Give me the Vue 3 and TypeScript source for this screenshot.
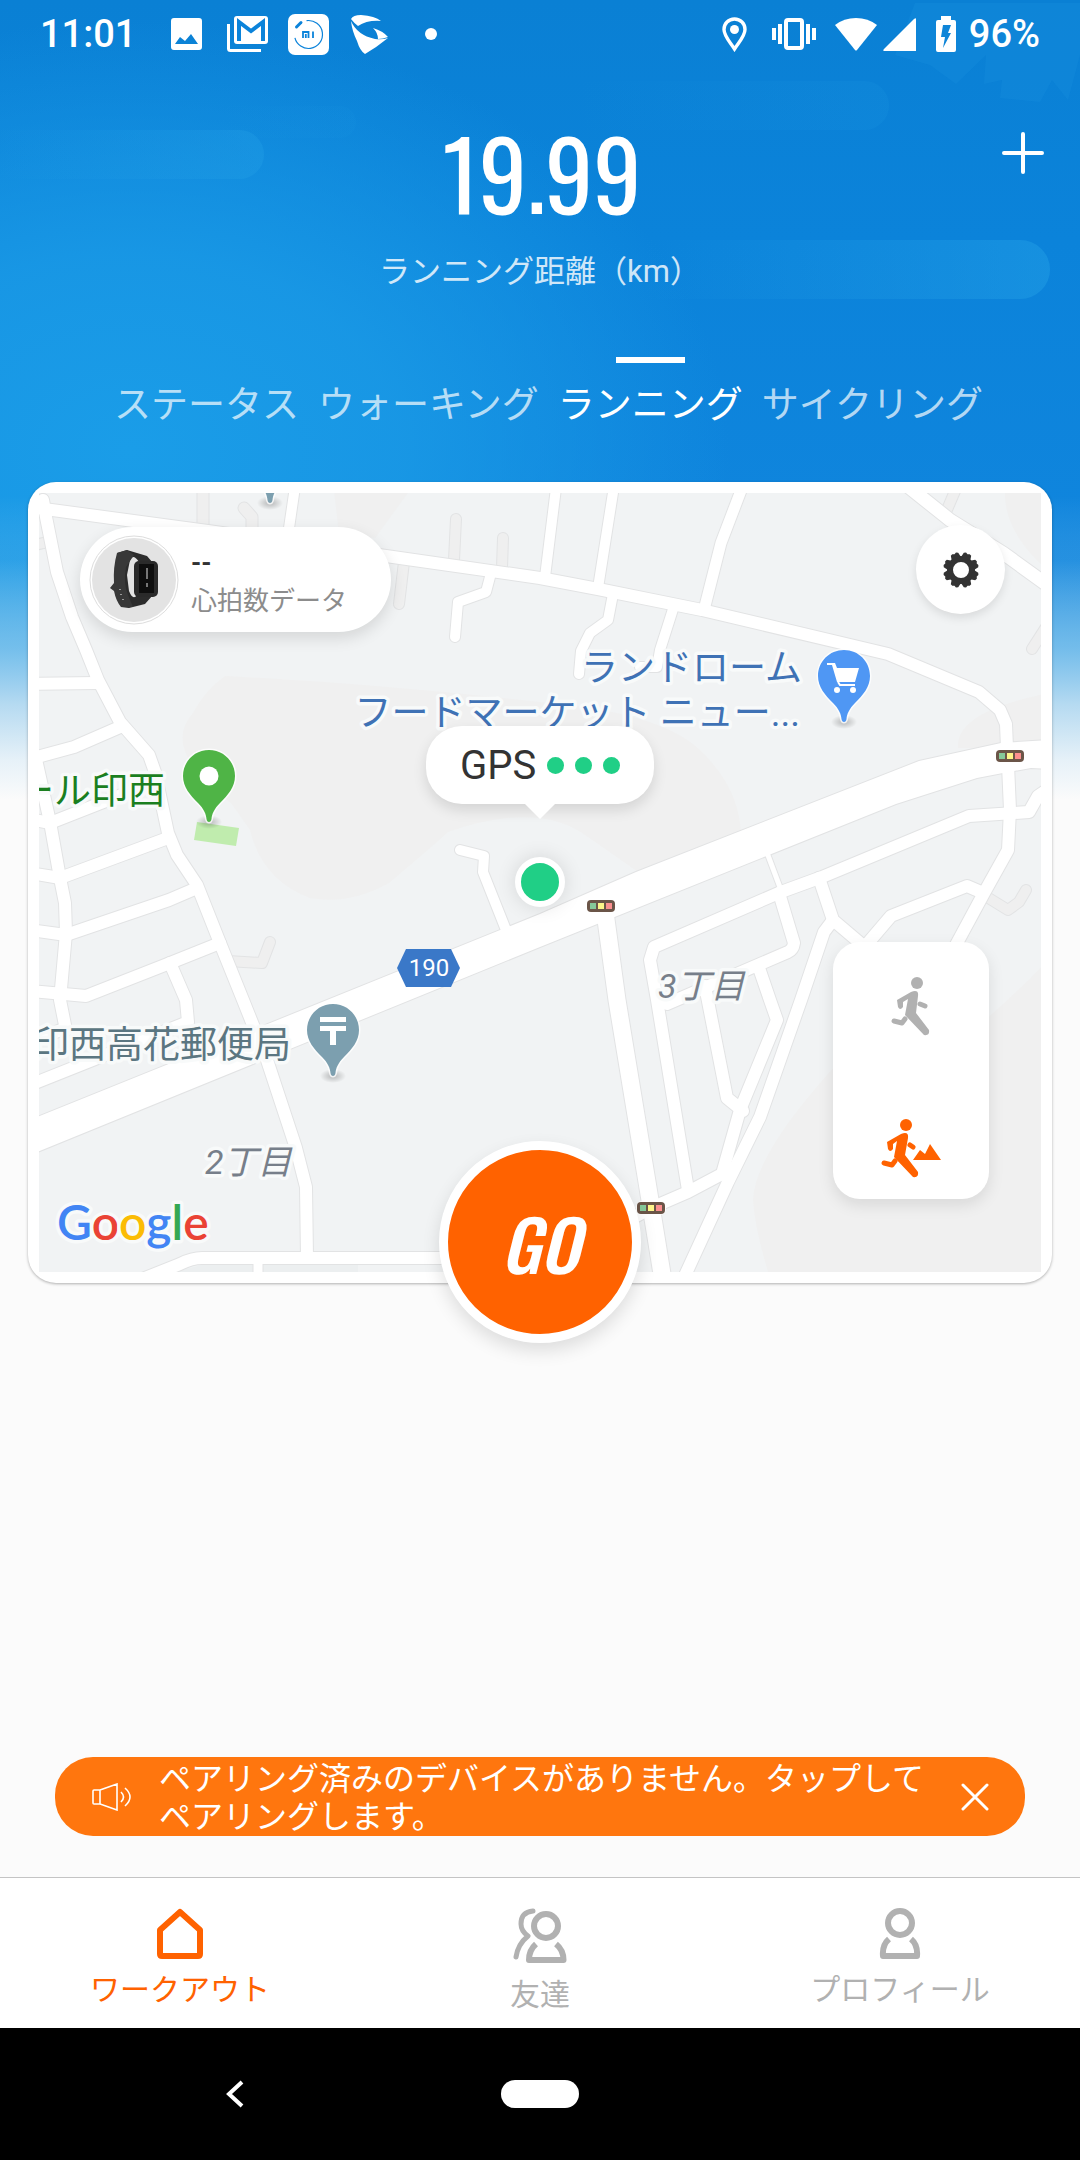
<script setup lang="ts">
import { ref } from 'vue'

interface Road { d: string; w: number }
interface Point { x: number; y: number }
interface Label { text: string; x: number; y: number; kind: string }
interface Pin extends Point { color: string; kind: string }

const tabs: string[] = ['ステータス', 'ウォーキング', 'ランニング', 'サイクリング']
const activeTab = ref(2)
const mode = ref<'road' | 'trail'>('trail')
const bannerOpen = ref(true)

const lanes: Road[] = [
  { d: 'M203 480V526', w: 11 },
  { d: 'M244 508L252 517V530', w: 11 },
  { d: 'M30 546L48 542', w: 10 },
  { d: 'M456 519L454 560', w: 10 },
  { d: 'M503 538L502 568', w: 10 },
  { d: 'M404 562L399 604', w: 10 },
  { d: 'M958 484L946 512', w: 10 },
  { d: 'M1048 624L1032 649', w: 10 },
  { d: 'M228 961L262 963L270 942', w: 10 },
  { d: 'M982 894L1008 910L1019 902L1026 890', w: 10 },
]

const roads: Road[] = [
  { d: 'M30 507L215 532L386 556L540 578L598 589L702 610L888 654L979 692L1000 710L1006 724L1007 748', w: 12 },
  { d: 'M43 500L46 517L57 572L72 617L86 650L98 680L120 722L149 755L155 772L168 833L177 855L197 885L220 943L243 1000L267 1060L296 1148L306 1187L307 1258', w: 12 },
  { d: 'M296 480L288 535', w: 10 },
  { d: 'M557 480L545 577', w: 10 },
  { d: 'M615 480L598 588', w: 10 },
  { d: 'M745 480L721 543L704 610', w: 11 },
  { d: 'M900 480L950 520L1003 553L1050 587', w: 13 },
  { d: 'M491 573L486 592L458 602L455 637', w: 10 },
  { d: 'M613 594L608 620L590 633L581 651L579 674', w: 10 },
  { d: 'M674 606L660 650L657 667L640 667', w: 10 },
  { d: 'M30 684L97 683', w: 12 },
  { d: 'M30 759L74 747L120 727', w: 12 },
  { d: 'M35 755L50 822L60 878L65 903L66 933L60 1000L66 1030', w: 12 },
  { d: 'M30 819L50 823L157 781', w: 12 },
  { d: 'M30 873L60 878L168 838', w: 12 },
  { d: 'M30 930L66 935L169 900L197 888', w: 12 },
  { d: 'M30 991L86 996L165 965L220 943', w: 12 },
  { d: 'M170 963L186 1000L188 1022L30 1085', w: 12 },
  { d: 'M30 1042L66 1028', w: 12 },
  { d: 'M140 1280L180 1264Q192 1258 202 1258H560L651 1208L688 1192L722 1174L740 1110L777 1020L771 1003L759 968', w: 12 },
  { d: 'M258 1258V1280', w: 9 },
  { d: 'M460 850L484 856L483 872L506 930', w: 10 },
  { d: 'M604 905L617 1000L650 1200L663 1280', w: 17 },
  { d: 'M1008 765L1010 810L1008 850L984 893L950 956', w: 12 },
  { d: 'M1050 788L1038 796L1029 812L969 816L822 877L781 892L654 947L650 960L657 1000L688 1190', w: 12 },
  { d: 'M766 850L781 890', w: 5 },
  { d: 'M779 893L794 943Q793 950 788 952L667 1004', w: 12 },
  { d: 'M705 986L727 1098L743 1111', w: 12 },
  { d: 'M819 878L833 920L866 948', w: 12 },
  { d: 'M833 920L824 932L801 1000L760 1117L728 1182L682 1282', w: 12 },
  { d: 'M981 892L967 886L891 916L862 950', w: 12 },
]

const highway =
  'M30 1120L540 914L636 872L919 761L1001 743L1050 740V769L1031 768L1003 773L977 778L896 804L540 947L30 1155Z'

const signals: Point[] = [
  { x: 601, y: 906 },
  { x: 1010, y: 756 },
  { x: 651, y: 1208 },
]

const pins: Pin[] = [
  { x: 209, y: 776, color: '#4fb446', kind: 'place' },
  { x: 844, y: 676, color: '#4f97f4', kind: 'shop' },
  { x: 333, y: 1030, color: '#7c9faf', kind: 'post' },
  { x: 270, y: 457, color: '#7c9faf', kind: 'none' },
]

const labels: Label[] = [
  { text: 'ール印西', x: 165, y: 804, kind: 'park' },
  { text: 'ランドローム', x: 802, y: 681, kind: 'shop' },
  { text: 'フードマーケット ニュー...', x: 800, y: 726, kind: 'shop' },
  { text: '印西高花郵便局', x: 291, y: 1058, kind: 'post' },
]
</script>

<template>
  <div class="screen">
    <svg class="backdrop" viewBox="0 0 1080 800" preserveAspectRatio="none" aria-hidden="true">
      <defs>
        <linearGradient id="sky" x1="0" y1="0" x2="0" y2="1">
          <stop offset="0" stop-color="#0a80d4" />
          <stop offset=".3" stop-color="#0b83da" />
          <stop offset="1" stop-color="#1487e0" />
        </linearGradient>
        <radialGradient id="glow" gradientUnits="userSpaceOnUse" cx="0" cy="0" r="1" gradientTransform="translate(130 450) scale(600 430)">
          <stop offset="0" stop-color="#1a9de8" />
          <stop offset=".45" stop-color="#1a9ae6" stop-opacity=".85" />
          <stop offset="1" stop-color="#1a9ae6" stop-opacity="0" />
        </radialGradient>
        <linearGradient id="cloud" x1="0" y1="0" x2="1" y2="0">
          <stop offset=".1" stop-color="#27a5e8" stop-opacity="0" />
          <stop offset="1" stop-color="#27a5e8" stop-opacity=".4" />
        </linearGradient>
        <linearGradient id="fade" x1="0" y1="0" x2="0" y2="1">
          <stop offset=".62" stop-color="#fbfbfb" stop-opacity="0" />
          <stop offset=".7" stop-color="#9fd2ee" stop-opacity=".15" />
          <stop offset=".81" stop-color="#84c6ed" stop-opacity=".85" />
          <stop offset=".88" stop-color="#b5daf1" />
          <stop offset=".95" stop-color="#e6f1f8" />
          <stop offset="1" stop-color="#fbfbfb" />
        </linearGradient>
      </defs>
      <rect width="1080" height="800" fill="url(#sky)" />
      <rect width="1080" height="800" fill="url(#glow)" />
      <rect x="-40" y="130" width="304" height="49" rx="25" fill="url(#cloud)" opacity=".7" />
      <rect x="200" y="106" width="156" height="32" rx="16" fill="url(#cloud)" opacity=".15" />
      <rect x="540" y="81" width="349" height="49" rx="25" fill="url(#cloud)" opacity=".3" />
      <rect x="600" y="240" width="450" height="59" rx="30" fill="url(#cloud)" />
      <path d="M915 3H1080V55L1068 100L1052 80L1040 102L1000 98L1002 80L984 84L986 55L956 84L930 65L895 55Z" fill="#27a5e8" opacity=".14" />
      <rect width="1080" height="800" fill="url(#fade)" />
    </svg>

    <header class="status">
      <div class="status-side">
        <span class="clock">11:01</span>
        <svg class="s-photo" width="31" height="32" viewBox="0 0 31 32"><path fill="#fff" fill-rule="evenodd" d="M3 0H28Q31 0 31 3V29Q31 32 28 32H3Q0 32 0 29V3Q0 0 3 0ZM4 26H27L20 16L14 23L9 19Z" /></svg>
        <svg class="s-mail" width="41" height="36" viewBox="0 0 41 36"><path d="M1.500 8V32.500Q1.500 34.500 3.500 34.500H34" fill="none" stroke="#fff" stroke-width="3" /><rect x="7" y="0" width="34" height="28" rx="3" fill="#fff" /><path d="M12 25V6L24 15L36 6V25" fill="none" stroke="#0b83da" stroke-width="4" /></svg>
        <svg class="s-mi" width="41" height="41" viewBox="0 0 41 41"><rect width="41" height="41" rx="7" fill="#fff" /><circle cx="20.500" cy="20.500" r="14" fill="none" stroke="#0b83da" stroke-width="1.200" stroke-dasharray="64 24" transform="rotate(-98 20.500 20.500)" /><path d="M8.500 13L13 8.500" stroke="#0b83da" stroke-width="3" stroke-linecap="round" /><path d="M15 24V18H20.500V24M17.800 20V24M25 17.500V24" fill="none" stroke="#0b83da" stroke-width="1.800" /></svg>
        <svg class="s-wing" width="38" height="39" viewBox="0 0 38 39"><path fill="#fff" d="M0 4Q2 0 10 0Q24 1 30 6Q16 5 7 11Q3 8 0 4ZM0 6Q6 20 24 24Q31 25 37 23Q26 32 14 39Q9 36 6 26Q1 16 0 6ZM22 13Q32 16 37 22Q32 24 27 24Q27 18 22 13Z" /></svg>
        <span class="s-dot"></span>
      </div>
      <div class="status-side">
        <svg class="s-loc" width="25" height="35" viewBox="0 0 25 35"><path d="M12.500 2C6.500 2 2 6.500 2 12.500C2 19 8 25 12.500 32C17 25 23 19 23 12.500C23 6.500 18.500 2 12.500 2Z" fill="none" stroke="#fff" stroke-width="3.400" /><circle cx="12.500" cy="12.500" r="4.500" fill="#fff" /></svg>
        <svg class="s-vib" width="44" height="32" viewBox="0 0 44 32"><rect x="14" y="2" width="16" height="28" rx="2" fill="none" stroke="#fff" stroke-width="4" /><path d="M2 10V22M8 6V26M36 6V26M42 10V22" stroke="#fff" stroke-width="4" /></svg>
        <svg class="s-wifi" width="42" height="33" viewBox="0 0 42 33"><path d="M0 7Q9 0 21 0T42 7L22 32Q21 33 20 32Z" fill="#fff" /></svg>
        <svg class="s-sig" width="33" height="33" viewBox="0 0 33 33"><path d="M33 1V33H1Q-.5 32.500 1 31L31 1Q33-.5 33 1Z" fill="#fff" /></svg>
        <svg class="s-bat" width="20" height="36" viewBox="0 0 20 36"><path fill="#fff" fill-rule="evenodd" d="M5 0H15V4H18Q20 4 20 6V34Q20 36 18 36H2Q0 36 0 34V6Q0 4 2 4H5ZM7 9L5 21H9L7 32L15 17H12L15 9Z" /></svg>
        <span class="percent">96%</span>
      </div>
    </header>

    <section class="summary">
      <button class="add" type="button" aria-label="追加">
        <svg width="42" height="42" viewBox="0 0 42 42"><path d="M21 2V40M2 21H40" stroke="#fff" stroke-width="4" stroke-linecap="round" /></svg>
      </button>
      <div class="distance">19.99</div>
      <div class="caption">ランニング距離（km）</div>
    </section>

    <nav class="tabs">
      <button
        v-for="(tab, i) in tabs"
        :key="tab"
        type="button"
        class="tab"
        :class="{ active: i === activeTab }"
        @click="activeTab = i"
      >{{ tab }}</button>
    </nav>

    <main class="card">
      <svg class="map" viewBox="39 493 1002 779" role="img" aria-label="地図">
        <defs>
          <radialGradient id="ground"><stop offset="0" stop-opacity=".25" /><stop offset="1" stop-opacity="0" /></radialGradient>
        </defs>
        <rect x="39" y="493" width="1002" height="779" fill="#f1f3f4" />
        <g fill="#f0f0f0">
          <path d="M225 676Q380 684 540 702Q660 712 700 750Q742 790 741 840L638 872L588 837Q540 800 448 832Q440 840 389 883Q350 905 310 898Q262 880 250 830L231 803Q160 750 193 713Q205 690 225 676Z" />
          <path d="M850 1050Q755 1150 753 1200Q755 1230 769 1275H1045V963Q1000 1010 960 1040Z" />
          <path d="M958 748Q955 712 1045 694V748Z" />
          <path d="M334 490L339 533L375 538L410 490Z" />
          <path d="M1005 490Q1003 530 1045 568V490Z" />
        </g>
        <path d="M175 1272L205 1264H358V1272Z" fill="#eceff0" />
        <g fill="none" stroke-linecap="round" stroke-linejoin="round">
          <path v-for="(r, i) in lanes" :key="'lc' + i" :d="r.d" stroke="#e2e3e4" :stroke-width="r.w + 2" />
          <path v-for="(r, i) in lanes" :key="'lf' + i" :d="r.d" stroke="#efefef" :stroke-width="r.w" />
          <path v-for="(r, i) in roads" :key="'rc' + i" :d="r.d" stroke="#e2e3e4" :stroke-width="r.w + 2" />
          <path :d="highway" stroke="#e2e3e4" stroke-width="2" />
          <path v-for="(r, i) in roads" :key="'rf' + i" :d="r.d" stroke="#fff" :stroke-width="r.w" />
        </g>
        <path :d="highway" fill="#fff" />
        <path d="M197 822L239 828L236 846L194 840Z" fill="#c0ecae" />

        <g v-for="(s, i) in signals" :key="'s' + i" :transform="`translate(${s.x} ${s.y})`">
          <rect x="-15" y="-7" width="30" height="14" rx="6" fill="#fff" />
          <rect x="-14" y="-6" width="28" height="12" rx="4" fill="#6b5548" />
          <rect x="-11" y="-3" width="6" height="6" fill="#86c99a" />
          <rect x="-3" y="-3" width="6" height="6" fill="#fdf58a" />
          <rect x="5" y="-3" width="6" height="6" fill="#fb8f8f" />
        </g>

        <path d="M406 949H451L460 968L451 987H406L397 968Z" fill="#3a78c8" />
        <text class="shield" x="429" y="976" text-anchor="middle">190</text>

        <g v-for="(p, i) in pins" :key="'p' + i" :transform="`translate(${p.x} ${p.y})`">
          <ellipse cx="0" cy="46" rx="13" ry="7" fill="url(#ground)" />
          <path
            d="M0-26C14.500-26 26-14.500 26 0C26 11 19 19 11 27C5 33 3 38 2.500 43Q2 46 0 46T-2.500 43C-3 38-5 33-11 27C-19 19-26 11-26 0C-26-14.500-14.500-26 0-26Z"
            :fill="p.color" stroke="#fff" stroke-width="3" stroke-opacity=".8" paint-order="stroke"
          />
          <circle v-if="p.kind === 'place'" r="9.500" fill="#fff" />
          <g v-else-if="p.kind === 'shop'">
            <path d="M-17-13H-9L-7-8H15L11 6H-7L-12-11H-17Z" fill="#fff" />
            <path d="M-6 6L-4 9H11" fill="none" stroke="#fff" stroke-width="2" />
            <circle cx="-7" cy="14" r="3" fill="#fff" /><circle cx="9" cy="14" r="3" fill="#fff" />
          </g>
          <path v-else-if="p.kind === 'post'" d="M-13-13H13V-8H-13ZM-13-4H13V1H3V15H-3V1H-13Z" fill="#fff" />
        </g>

        <text v-for="l in labels" :key="l.text" class="label" :class="l.kind" :x="l.x" :y="l.y" text-anchor="end">{{ l.text }}</text>
        <text class="label block" x="658" y="998">3丁目</text>
        <text class="label block" x="205" y="1174">2丁目</text>
        <text class="label brand" x="57" y="1240"><tspan fill="#4285f4">G</tspan><tspan fill="#ea4335">o</tspan><tspan fill="#fbbc05">o</tspan><tspan fill="#4285f4">g</tspan><tspan fill="#34a853">l</tspan><tspan fill="#ea4335">e</tspan></text>
      </svg>

      <button class="heart" type="button">
        <svg width="90" height="90" viewBox="0 0 90 90" aria-hidden="true">
          <circle cx="45" cy="45" r="44" fill="#fff" stroke="#ddd" />
          <circle cx="45" cy="45" r="42" fill="#e3e3e3" />
          <path d="M28 18L38 15L58 21L64 28L50 27Q44 18 41 25L38 40L40 56Q44 66 48 60L64 60L56 69L40 73L32 72L35 50Z" fill="#2c2c2c" />
          <path d="M28 18L38 15L45 20L37 32Q34 48 39 60L44 72L32 72Q27 66 25 56L21 53L25 48Q24 32 28 18Z" fill="#383838" />
          <rect x="45" y="26" width="24" height="36" rx="5" fill="#2a2a2a" />
          <rect x="50" y="29" width="15" height="29" fill="#0e0e0e" />
          <path d="M58 33V44M58 48V52" stroke="#777" stroke-width="2" />
          <path d="M31 54V55M32 59V60M34 64V65" stroke="#999" stroke-width="2" />
        </svg>
        <span class="heart-text">
          <span class="heart-value">--</span>
          <span class="heart-name">心拍数データ</span>
        </span>
      </button>

      <button class="settings" type="button" aria-label="設定">
        <svg width="36" height="36" viewBox="-18 -18 36 36"><g fill="#333"><path fill-rule="evenodd" d="M0-14A14 14 0 1 1 0 14A14 14 0 1 1 0-14ZM0-8A8 8 0 1 0 0 8A8 8 0 1 0 0-8Z" /><path v-for="a in 8" :key="a" d="M-5-12L-4-17L-2-18L0-17L2-18L4-17L5-12Z" :transform="`rotate(${a * 45 - 22.5})`" /></g></svg>
      </button>

      <div class="gps">
        <span class="gps-name">GPS</span><i></i><i></i><i></i>
      </div>
      <div class="here"></div>

      <div class="modes">
        <button type="button" aria-label="ランニング" :aria-pressed="mode === 'road'" @click="mode = 'road'">
          <svg width="40" height="60" viewBox="0 0 40 60" :class="{ on: mode === 'road' }">
            <circle cx="26" cy="6" r="6" fill="currentColor" />
            <path d="M20 15Q28 12 27 19L25 36L38 53Q39 59 33 58L14 38L17 22L12 25L12 30Q9 34 7 30L6 23Z" fill="currentColor" />
            <path d="M29 27L34 29M3 44L11 46L14 42" fill="none" stroke="currentColor" stroke-width="5" stroke-linecap="round" stroke-linejoin="round" />
          </svg>
        </button>
        <button type="button" aria-label="トレイルラン" :aria-pressed="mode === 'trail'" @click="mode = 'trail'">
          <svg width="60" height="60" viewBox="0 0 60 60" :class="{ on: mode === 'trail' }">
            <circle cx="25" cy="6" r="6" fill="currentColor" />
            <path d="M20 15Q28 12 27 19L24 36L37 53Q38 59 32 58L13 38L16 22L12 25L12 30Q9 34 7 30L6 23Z" fill="currentColor" />
            <path d="M29 26L32 28M3 44L11 46L14 42" fill="none" stroke="currentColor" stroke-width="5" stroke-linecap="round" stroke-linejoin="round" />
            <path d="M32 41L39 31L44 35L49 25L60 41Z" fill="currentColor" />
          </svg>
        </button>
      </div>
    </main>

    <button class="go" type="button">GO</button>

    <aside v-if="bannerOpen" class="banner">
      <svg width="40" height="28" viewBox="0 0 40 28" fill="none" stroke="#fff" stroke-width="1.600" aria-hidden="true"><path d="M1 8Q1 7 2 7H8V21H2Q1 21 1 20ZM8 7L25 1V27L8 21ZM29 9Q34 14 29 19M33 5Q43 14 33 23" /></svg>
      <a class="banner-text" href="#pair">ペアリング済みのデバイスがありません。タップしてペアリングします。</a>
      <button class="close" type="button" aria-label="閉じる" @click="bannerOpen = false">
        <svg width="28" height="28" viewBox="0 0 28 28"><path d="M2 2L26 26M26 2L2 26" stroke="#fff" stroke-width="3" stroke-linecap="round" /></svg>
      </button>
    </aside>

    <nav class="bottom" :class="{ alone: !bannerOpen }">
      <a class="item current" href="#workout">
        <svg width="46" height="51" viewBox="0 0 46 51"><path d="M23 4L43 22V46Q43 48 41 48H5Q3 48 3 46V22Z" fill="none" stroke="currentColor" stroke-width="6" stroke-linejoin="round" /></svg>
        <span>ワークアウト</span>
      </a>
      <a class="item" href="#friends">
        <svg width="54" height="56" viewBox="0 0 54 56" fill="none" stroke="currentColor" stroke-width="6"><circle cx="33" cy="18" r="12" /><path d="M23 36Q16 42 16 52H50.500Q50.500 42 43 36" stroke-linejoin="round" /><path d="M20 3Q8 4 8 16Q8 23 15 28Q5 36 3 49" stroke-linecap="round" stroke-linejoin="round" stroke-width="5" /></svg>
        <span>友達</span>
      </a>
      <a class="item" href="#profile">
        <svg width="42" height="51" viewBox="0 0 42 51" fill="none" stroke="currentColor" stroke-width="6"><circle cx="21" cy="15" r="12" /><path d="M10 31Q3 37 4 48H38Q39 37 32 31" stroke-linejoin="round" /></svg>
        <span>プロフィール</span>
      </a>
    </nav>

    <footer class="system">
      <button class="back" type="button" aria-label="戻る">
        <svg width="18" height="28" viewBox="0 0 18 28"><path d="M16 2L3 14L16 26" fill="none" stroke="#fff" stroke-width="4" /></svg>
      </button>
      <button class="home" type="button" aria-label="ホーム"></button>
    </footer>
  </div>
</template>

<style>
body {
  margin: 0;
}
</style>

<style scoped>
.screen {
  position: relative;
  display: flex;
  flex-direction: column;
  min-height: 100vh;
  background: #fbfbfb;
  font-family: Roboto, "Noto Sans CJK JP", sans-serif;
  color: #fff;
}
.screen > * {
  position: relative;
}
.screen > .backdrop {
  position: absolute;
  top: 0;
  left: 0;
  width: 100%;
  height: 800px;
}
svg {
  display: block;
  flex: none;
}
button {
  padding: 0;
  border: 0;
  background: none;
  font-family: inherit;
  color: inherit;
}
a {
  color: inherit;
  text-decoration: none;
}

.status {
  display: flex;
  justify-content: space-between;
  height: 68px;
  padding: 0 40px;
  font-size: 38px;
  font-weight: 500;
  line-height: 68px;
}
.status-side {
  display: flex;
  align-items: center;
}
.s-photo {
  margin-left: 35px;
}
.s-mail {
  margin-left: 25px;
}
.s-mi {
  margin-left: 20px;
}
.s-wing {
  margin-left: 22px;
}
.s-dot {
  width: 12px;
  height: 12px;
  margin-left: 36px;
  border-radius: 50%;
  background: #fff;
}
.s-vib {
  margin-left: 25px;
}
.s-wifi {
  margin-left: 19px;
}
.s-sig {
  margin-left: 6px;
}
.s-bat {
  margin-left: 20px;
}
.percent {
  margin-left: 13px;
}

.summary {
  padding-top: 53px;
  text-align: center;
}
.distance {
  padding-left: 4px;
  font-family: Oswald, "Roboto Condensed", "Liberation Sans Narrow", Roboto, sans-serif;
  font-size: 96px;
  line-height: 100px;
}
.caption {
  margin-top: 31px;
  font-size: 31px;
  line-height: 40px;
  opacity: 0.8;
}
.add {
  position: absolute;
  top: 64px;
  right: 36px;
}

.tabs {
  display: flex;
  justify-content: center;
  gap: 19px;
  margin: 65px 0 54px;
  padding-left: 17px;
}
.tab {
  padding-top: 27px;
  font-size: 37px;
  line-height: 44px;
  color: rgba(255, 255, 255, 0.7);
  white-space: nowrap;
}
.tab.active {
  color: #fff;
  background: linear-gradient(#fff, #fff) top center / 69px 6px no-repeat;
}

.card {
  margin: 0 28px;
  padding: 11px;
  border-radius: 28px;
  background: #fff;
  box-shadow: 0 1px 3px rgba(0, 0, 0, 0.3);
}
.map {
  width: 100%;
  height: auto;
}
.shield {
  font-size: 24px;
  fill: #fff;
}
.label {
  font-size: 37px;
  stroke: #f8fafa;
  stroke-width: 7px;
  stroke-linejoin: round;
  paint-order: stroke;
}
.park {
  fill: #1b7f1f;
}
.shop {
  fill: #3f72b5;
}
.post {
  fill: #5b7681;
}
.block {
  font-size: 34px;
  font-style: italic;
  fill: #777f8a;
}
.brand {
  font-family: Lato, sans-serif;
  font-size: 48px;
  font-weight: 600;
}

.heart {
  position: absolute;
  top: 45px;
  left: 52px;
  display: flex;
  align-items: center;
  gap: 12px;
  width: 311px;
  height: 105px;
  padding-left: 9px;
  border-radius: 53px;
  background: #fff;
  box-shadow: 0 6px 16px rgba(0, 0, 0, 0.12);
  text-align: left;
}
.heart-text {
  display: flex;
  flex-direction: column;
  padding-top: 5px;
  font-size: 26px;
  line-height: 38px;
  color: #8c8c8c;
}
.heart-value {
  font-weight: 700;
  color: #333;
}
.settings {
  position: absolute;
  top: 43px;
  right: 47px;
  display: grid;
  place-items: center;
  width: 89px;
  height: 89px;
  border-radius: 50%;
  background: #fff;
  box-shadow: 0 4px 10px rgba(0, 0, 0, 0.1);
}
.gps {
  position: absolute;
  top: 244px;
  left: 50%;
  display: flex;
  align-items: center;
  gap: 11px;
  box-sizing: border-box;
  width: 228px;
  height: 78px;
  margin-left: -114px;
  padding-left: 34px;
  border-radius: 36px;
  background: #fff;
  box-shadow: 0 6px 14px rgba(0, 0, 0, 0.12);
  font-size: 40px;
  color: #333;
}
.gps::after {
  content: "";
  position: absolute;
  top: 77px;
  left: 98px;
  border: 16px solid transparent;
  border-top-color: #fff;
  border-bottom: 0;
}
.gps i {
  width: 17px;
  height: 17px;
  border-radius: 50%;
  background: #20cf86;
}
.here {
  position: absolute;
  top: 375px;
  left: 50%;
  width: 38px;
  height: 38px;
  margin-left: -25px;
  border: 6px solid #fff;
  border-radius: 50%;
  background: #20cf86;
  box-shadow: 0 0 20px rgba(0, 0, 0, 0.12);
}
.modes {
  position: absolute;
  right: 63px;
  bottom: 84px;
  display: flex;
  flex-direction: column;
  align-items: center;
  justify-content: space-between;
  box-sizing: border-box;
  width: 156px;
  height: 257px;
  padding: 35px 0 20px;
  border-radius: 27px;
  background: #fff;
  box-shadow: 0 6px 16px rgba(0, 0, 0, 0.1);
}
.modes svg {
  color: #b1b1b1;
}
.modes .on {
  color: #ff6200;
}

.go {
  align-self: center;
  width: 202px;
  height: 202px;
  margin-top: -142px;
  border: 9px solid #fff;
  border-radius: 50%;
  background: #ff6200;
  box-shadow: 0 8px 18px rgba(0, 0, 0, 0.12);
  font-family: Oswald, "Roboto Condensed", "Liberation Sans Narrow", Roboto, sans-serif;
  font-size: 70px;
  font-style: italic;
  font-weight: 500;
}

.banner {
  display: flex;
  align-items: center;
  box-sizing: border-box;
  min-height: 79px;
  margin: auto 55px 41px;
  padding: 0 36px 0 37px;
  border-radius: 38px;
  background: #ff760e;
}
.banner-text {
  flex: 1;
  margin-left: 27px;
  padding: 3px 20px 0 0;
  font-size: 32px;
  line-height: 38px;
}
.bottom {
  display: flex;
  height: 150px;
  border-top: 1px solid #c4c4c4;
  background: #fff;
  color: #b1b1b1;
}
.bottom.alone {
  margin-top: auto;
}
.item {
  display: flex;
  flex: 1;
  flex-direction: column;
  align-items: center;
  gap: 11px;
  padding-top: 30px;
  font-size: 30px;
  line-height: 40px;
}
.current {
  color: #ff6200;
}
.system {
  display: grid;
  grid-template-columns: 1fr 78px 1fr;
  align-items: center;
  height: 132px;
  background: #000;
}
.back {
  justify-self: center;
  margin-right: 32px;
}
.back + .home {
  height: 28px;
  border-radius: 14px;
  background: #fff;
}
</style>
